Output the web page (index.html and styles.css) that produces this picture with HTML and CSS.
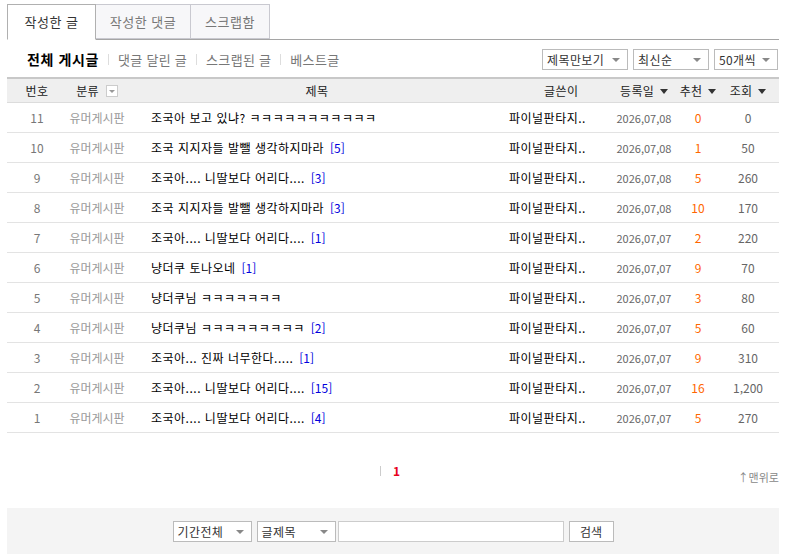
FILE: index.html
```html
<!DOCTYPE html>
<html lang="ko">
<head>
    <meta charset="UTF-8">
    <title>작성한 글</title>
    <link rel="stylesheet" href="styles.css">
</head>
<body>
    <div class="wrap">
        <ul class="tabs">
            <li class="tab active">작성한 글</li>
            <li class="tab">작성한 댓글</li>
            <li class="tab">스크랩함</li>
        </ul>

        <div class="subbar">
            <div class="subnav">
                <span class="on">전체 게시글</span>
                <span class="bar"></span>
                <span>댓글 달린 글</span>
                <span class="bar"></span>
                <span>스크랩된 글</span>
                <span class="bar"></span>
                <span>베스트글</span>
            </div>
            <div class="filters">
                <div class="sel w86">제목만보기<i class="arr"></i></div>
                <div class="sel w76">최신순<i class="arr"></i></div>
                <div class="sel w64">50개씩<i class="arr"></i></div>
            </div>
        </div>

        <table class="list">
            <colgroup>
                <col style="width:60px">
                <col style="width:60px">
                <col>
                <col style="width:114px">
                <col style="width:70px">
                <col style="width:38px">
                <col style="width:62px">
            </colgroup>
            <thead>
                <tr>
                    <th>번호</th>
                    <th>분류 <span class="mini"><i></i></span></th>
                    <th>제목</th>
                    <th>글쓴이</th>
                    <th>등록일 <i class="sort"></i></th>
                    <th>추천 <i class="sort"></i></th>
                    <th>조회 <i class="sort"></i></th>
                </tr>
            </thead>
            <tbody id="rows"></tbody>
        </table>

        <div class="pager">
            <span class="pbar"></span>
            <span class="cur">1</span>
            <a class="top">↑맨위로</a>
        </div>

        <div class="search">
            <div class="sel w79">기간전체<i class="arr"></i></div>
            <div class="sel w79">글제목<i class="arr"></i></div>
            <input type="text" class="kw">
            <button class="btn">검색</button>
        </div>
    </div>

    <script>
        const posts = [
            [11, "조국아 보고 있냐? ㅋㅋㅋㅋㅋㅋㅋㅋㅋㅋㅋ", "", "2026,07,08", 0, "0"],
            [10, "조국 지지자들 발뺄 생각하지마라", "[5]", "2026,07,08", 1, "50"],
            [9, "조국아.... 니딸보다 어리다....", "[3]", "2026,07,08", 5, "260"],
            [8, "조국 지지자들 발뺄 생각하지마라", "[3]", "2026,07,08", 10, "170"],
            [7, "조국아.... 니딸보다 어리다....", "[1]", "2026,07,07", 2, "220"],
            [6, "냥더쿠 토나오네", "[1]", "2026,07,07", 9, "70"],
            [5, "냥더쿠님 ㅋㅋㅋㅋㅋㅋㅋ", "", "2026,07,07", 3, "80"],
            [4, "냥더쿠님 ㅋㅋㅋㅋㅋㅋㅋㅋㅋ", "[2]", "2026,07,07", 5, "60"],
            [3, "조국아... 진짜 너무한다.....", "[1]", "2026,07,07", 9, "310"],
            [2, "조국아.... 니딸보다 어리다....", "[15]", "2026,07,07", 16, "1,200"],
            [1, "조국아.... 니딸보다 어리다....", "[4]", "2026,07,07", 5, "270"]
        ];

        const body = document.getElementById("rows");
        posts.forEach(p => {
            let tr = document.createElement("tr");
            tr.innerHTML =
                '<td class="num">' + p[0] + '</td>' +
                '<td class="cat">유머게시판</td>' +
                '<td class="subj">' + p[1] + (p[2] ? ' <span class="cmt">' + p[2] + '</span>' : '') + '</td>' +
                '<td class="nick">파이널판타지..</td>' +
                '<td class="date">' + p[3] + '</td>' +
                '<td class="rec">' + p[4] + '</td>' +
                '<td class="hit">' + p[5] + '</td>';
            body.appendChild(tr);
        });
    </script>
</body>
</html>
```

FILE: styles.css
```css
body {
    margin: 0;
    font-family: "Noto Sans CJK KR", "Liberation Sans", sans-serif;
    font-size: 12px;
    color: #000;
    background: #fff;
}
.wrap {
    width: 772px;
    padding: 4px 7px 0;
}
.tabs {
    list-style: none;
    margin: 0;
    padding: 0;
    display: flex;
    border-bottom: 1px solid #a5a5a5;
    height: 35px;
}
.tab {
    width: 95px;
    height: 35px;
    line-height: 33px;
    text-align: center;
    font-size: 13px;
    letter-spacing: 0.5px;
    color: #777;
    background: #f7f7f9;
    border: 1px solid #c9c9d0;
    border-left: none;
    box-sizing: border-box;
}
.tab:nth-child(3) {
    width: 79px;
}
.tab.active {
    width: 89px;
    height: 36px;
    color: #333;
    background: #fff;
    border: 1px solid #b0b0b0;
    border-bottom: 1px solid #fff;
}
.subbar {
    display: flex;
    justify-content: space-between;
    align-items: center;
    height: 36px;
    padding-top: 1px;
}
.subnav {
    display: flex;
    align-items: center;
    padding-left: 20px;
    font-size: 13px;
    letter-spacing: 0.3px;
    color: #777;
}
.subnav .on {
    color: #000;
    font-weight: bold;
    font-size: 14px;
    letter-spacing: 0.6px;
}
.subnav .bar {
    width: 1px;
    height: 11px;
    background: #ddd;
    margin: 0 9px;
}
.filters {
    display: flex;
    gap: 5px;
    padding-right: 1px;
}
.sel {
    position: relative;
    height: 21px;
    line-height: 19px;
    box-sizing: border-box;
    border: 1px solid #bbb;
    background: #fff;
    padding-left: 4px;
    font-size: 12px;
    letter-spacing: 0.4px;
    color: #333;
}
.sel .arr {
    position: absolute;
    right: 7px;
    top: 8px;
    border-left: 4px solid transparent;
    border-right: 4px solid transparent;
    border-top: 4px solid #888;
}
.w86 { width: 86px; }
.w76 { width: 76px; }
.w64 { width: 64px; }
.w79 { width: 79px; }
.list {
    width: 100%;
    border-collapse: collapse;
    table-layout: fixed;
}
.list th {
    height: 23px;
    background: #efefef;
    border-top: 2px solid #c8c8c8;
    border-bottom: 1px solid #dcdcdc;
    font-weight: normal;
    color: #222;
    padding: 0;
    font-size: 12px;
    letter-spacing: 0.4px;
}
.list th:nth-child(3) {
    padding-left: 12px;
}
.list th:nth-child(4) {
    text-align: left;
    padding-left: 49px;
}
.mini {
    display: inline-block;
    position: relative;
    width: 10px;
    height: 10px;
    border: 1px solid #ccc;
    background: #fff;
    vertical-align: -1px;
    margin-left: 3px;
}
.mini i {
    position: absolute;
    left: 2px;
    top: 4px;
    border-left: 3px solid transparent;
    border-right: 3px solid transparent;
    border-top: 3px solid #999;
}
.sort {
    display: inline-block;
    border-left: 4px solid transparent;
    border-right: 4px solid transparent;
    border-top: 5px solid #333;
    vertical-align: 2px;
    margin-left: 2px;
}
.list td {
    height: 29px;
    padding: 0;
    border-bottom: 1px solid #e3e3e3;
    text-align: center;
    white-space: nowrap;
    overflow: hidden;
}
.list .num {
    color: #777;
}
.list .cat {
    color: #999;
}
.list td.subj {
    text-align: left;
    padding-left: 24px;
    letter-spacing: 0.5px;
}
.cmt {
    color: #0000dd;
    margin-left: 2px;
    letter-spacing: 0;
}
.list td.nick {
    text-align: left;
    padding-left: 14px;
    letter-spacing: 0.5px;
}
.list .date {
    color: #666;
    font-size: 11px;
}
.list .rec {
    color: #f60;
}
.list .hit {
    color: #666;
}
.pager {
    position: relative;
    height: 75px;
    display: flex;
    justify-content: center;
    align-items: center;
    padding-right: 6px;
}
.pbar {
    width: 1px;
    height: 10px;
    background: #ccc;
    margin-right: 12px;
}
.cur {
    color: #e8001c;
    font-weight: bold;
    font-size: 12px;
}
.top {
    position: absolute;
    right: 0;
    top: 36px;
    font-size: 11px;
    color: #888;
}
.search {
    background: #f4f4f4;
    height: 46px;
    display: flex;
    justify-content: center;
    align-items: flex-start;
    padding-top: 13px;
    box-sizing: border-box;
    gap: 5px;
}
.kw {
    width: 226px;
    height: 21px;
    box-sizing: border-box;
    border: 1px solid #ccc;
    margin: 0 0 0 -3px;
    padding: 0;
    background: #fff;
}
.btn {
    width: 45px;
    height: 21px;
    border: 1px solid #bbb;
    background: #fff;
    font-family: inherit;
    font-size: 12px;
    color: #333;
    padding: 0;
}
```
